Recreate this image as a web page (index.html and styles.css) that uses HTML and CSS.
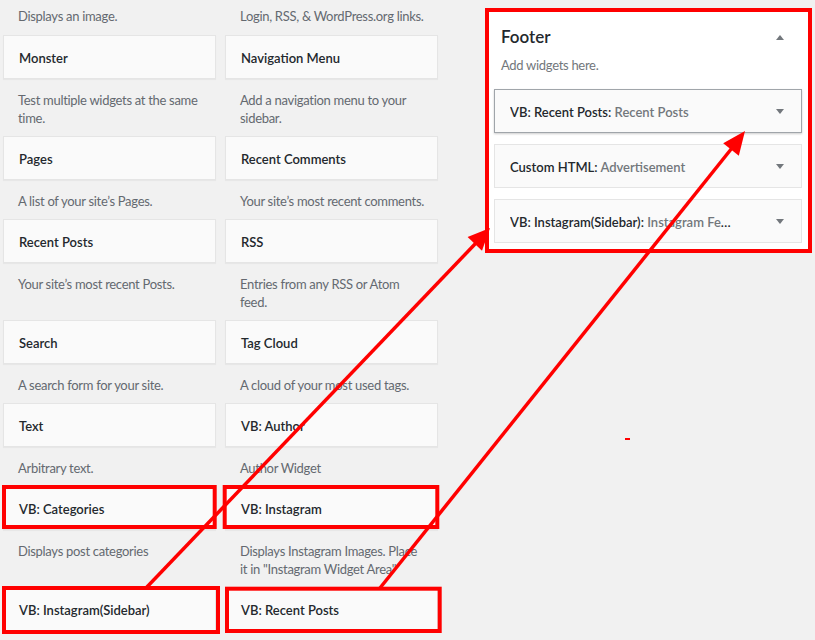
FILE: index.html
```html
<!DOCTYPE html>
<html lang="en">
<head>
<meta charset="utf-8">
<title>Widgets</title>
<link rel="stylesheet" href="styles.css">
</head>
<body>
<div class="layout">
  <div class="widget-list">
    <div class="cell"><div class="desc top">Displays an image.</div></div>
    <div class="cell"><div class="desc top">Login, RSS, &amp; WordPress.org links.</div></div>

    <div class="cell"><div class="widget">Monster</div><div class="desc">Test multiple widgets at the same<br>time.</div></div>
    <div class="cell"><div class="widget">Navigation Menu</div><div class="desc">Add a navigation menu to your<br>sidebar.</div></div>

    <div class="cell"><div class="widget">Pages</div><div class="desc">A list of your site’s Pages.</div></div>
    <div class="cell"><div class="widget">Recent Comments</div><div class="desc">Your site’s most recent comments.</div></div>

    <div class="cell"><div class="widget">Recent Posts</div><div class="desc">Your site’s most recent Posts.</div></div>
    <div class="cell"><div class="widget">RSS</div><div class="desc">Entries from any RSS or Atom<br>feed.</div></div>

    <div class="cell"><div class="widget">Search</div><div class="desc">A search form for your site.</div></div>
    <div class="cell"><div class="widget">Tag Cloud</div><div class="desc">A cloud of your most used tags.</div></div>

    <div class="cell"><div class="widget">Text</div><div class="desc">Arbitrary text.</div></div>
    <div class="cell"><div class="widget">VB: Author</div><div class="desc">Author Widget</div></div>

    <div class="cell"><div class="widget">VB: Categories</div><div class="desc">Displays post categories</div></div>
    <div class="cell"><div class="widget">VB: Instagram</div><div class="desc">Displays Instagram Images. Place<br>it in "Instagram Widget Area"</div></div>

    <div class="cell"><div class="widget">VB: Instagram(Sidebar)</div></div>
    <div class="cell"><div class="widget">VB: Recent Posts</div></div>
  </div>

  <div class="sidebar">
    <div class="sidebar-head">
      <h2>Footer</h2>
      <svg class="caret" viewBox="0 0 8 5"><polygon points="0,5 4,0 8,5"/></svg>
    </div>
    <div class="sidebar-desc">Add widgets here.</div>
    <div class="items">
      <div class="item open">
        <div class="item-title">VB: Recent Posts: <span class="in-title">Recent Posts</span></div>
        <svg class="caret" viewBox="0 0 8 5"><polygon points="0,0 8,0 4,5"/></svg>
      </div>
      <div class="item">
        <div class="item-title">Custom HTML: <span class="in-title">Advertisement</span></div>
        <svg class="caret" viewBox="0 0 8 5"><polygon points="0,0 8,0 4,5"/></svg>
      </div>
      <div class="item">
        <div class="item-title">VB: Instagram(Sidebar): <span class="in-title">Instagram Feed</span></div>
        <svg class="caret" viewBox="0 0 8 5"><polygon points="0,0 8,0 4,5"/></svg>
      </div>
    </div>
  </div>
</div>

<svg class="annotations" viewBox="0 0 815 640" width="815" height="640">
  <g fill="none" stroke="#ff0000" stroke-width="4">
    <rect x="487" y="10" width="323" height="241"/>
    <rect x="4" y="487" width="210.7" height="40"/>
    <rect x="224.7" y="487" width="212.6" height="40"/>
    <rect x="4" y="588" width="214" height="44"/>
    <rect x="227" y="588.7" width="212.7" height="42.3"/>
  </g>
  <g stroke="#ff0000" stroke-width="3.5" fill="none">
    <line x1="146" y1="588" x2="476" y2="243"/>
    <line x1="380" y1="588" x2="732" y2="148"/>
  </g>
  <g fill="#ff0000">
    <polygon points="490,228 482,250.8 467.6,237"/>
    <polygon points="745,131 738.8,155.7 723.2,143.3"/>
    <rect x="625" y="438" width="5" height="2"/>
  </g>
</svg>
</body>
</html>
```

FILE: styles.css
```css
html, body {
  margin: 0;
  overflow: hidden;
}

body {
  position: relative;
  width: 815px;
  height: 640px;
  background: #f1f1f1;
  font-family: Lato, "Liberation Sans", sans-serif;
  font-size: 13px;
  color: #444;
}

.layout {
  display: flex;
  align-items: flex-start;
}

.widget-list {
  display: grid;
  grid-template-columns: 213px 213px;
  column-gap: 9px;
  padding-left: 3px;
}

.cell {
  display: flex;
  flex-direction: column;
}

.widget {
  box-sizing: border-box;
  height: 44px;
  border: 1px solid #e5e5e5;
  background: #fafafa;
  box-shadow: 0 1px 1px rgba(0, 0, 0, 0.04);
  display: flex;
  align-items: center;
  padding: 2px 15px 0;
  font-weight: 600;
  color: #23282d;
}

.desc {
  padding: 12px 10px 9px 15px;
  line-height: 18px;
  white-space: nowrap;
  letter-spacing: -0.3px;
  color: #646970;
}

.desc.top {
  padding-top: 7px;
  padding-bottom: 10px;
}

.sidebar {
  box-sizing: border-box;
  width: 325px;
  margin: 9px 0 0 48px;
  padding: 16px 9px 9px 8px;
  background: #fff;
  box-shadow: 0 1px 1px rgba(0, 0, 0, 0.04);
}

.sidebar-head {
  display: flex;
  align-items: center;
  justify-content: space-between;
  height: 24px;
  padding: 0 18px 0 7px;
}

.sidebar-head h2 {
  margin: 0;
  font-size: 17px;
  font-weight: 600;
  line-height: 24px;
  color: #23282d;
}

.sidebar-desc {
  margin: 7px 0 15px 7px;
  line-height: 18px;
  letter-spacing: -0.3px;
  color: #72777c;
}

.items {
  display: flex;
  flex-direction: column;
  gap: 11px;
}

.item {
  box-sizing: border-box;
  height: 44px;
  border: 1px solid #e5e5e5;
  background: #fafafa;
  display: flex;
  align-items: center;
  padding: 0 17px 0 15px;
}

.item.open {
  border-color: #a0a5aa;
  box-shadow: 0 1px 2px rgba(0, 0, 0, 0.2);
}

.item-title {
  flex: 1;
  min-width: 0;
  white-space: nowrap;
  overflow: hidden;
  text-overflow: ellipsis;
  padding-top: 2px;
  padding-right: 42px;
  font-weight: 600;
  color: #23282d;
}

.in-title {
  color: #72777c;
}

.caret {
  flex: none;
  width: 8px;
  height: 5px;
  fill: #72777c;
}

.annotations {
  position: absolute;
  top: 0;
  left: 0;
  pointer-events: none;
}
```
